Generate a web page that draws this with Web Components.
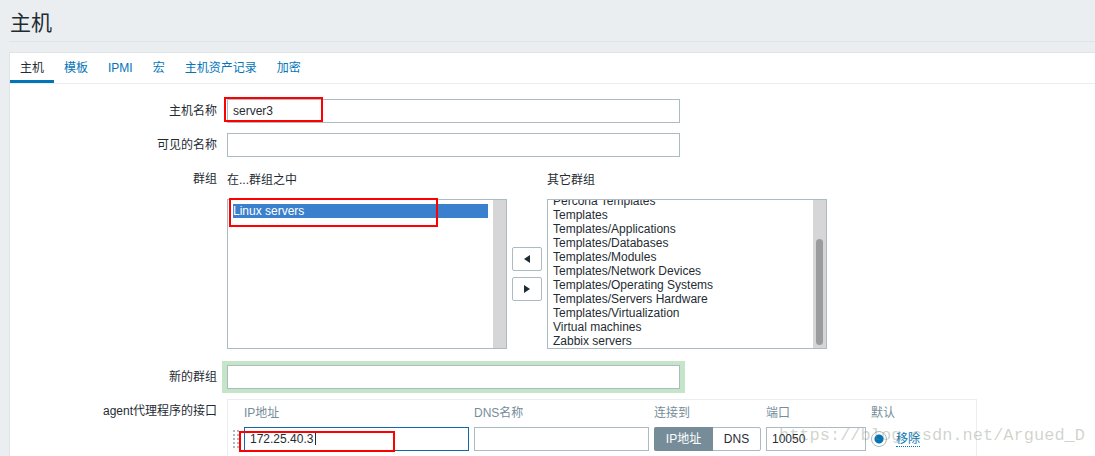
<!DOCTYPE html>
<html lang="zh-CN">
<head>
<meta charset="utf-8">
<meta name="viewport" content="width=device-width, initial-scale=1">
<title>主机</title>
<style>
  body {
    margin: 0;
    background: #ebeef0;
    color: #1f2c33;
    font: 12px/14px "Liberation Sans", "Noto Sans CJK SC", sans-serif;
  }
</style>
</head>
<body>
<host-page></host-page>

<script>
const FIELD_CSS = `
  *, *::before, *::after { box-sizing: border-box; }
  input, select, button { font: inherit; color: inherit; margin: 0; outline: none; }
  input[type="text"] {
    display: block;
    width: 100%;
    height: 24px;
    padding: 0 5px;
    border: 1px solid #acbbc2;
    border-radius: 0;
    background: #fff;
  }
`;

class TabBar extends HTMLElement {
  constructor() {
    super();
    this.attachShadow({ mode: 'open' });
  }

  connectedCallback() {
    const tabs = this.getAttribute('tabs').split(',');
    this.shadowRoot.innerHTML = `
      <style>
        :host { display: block; border-bottom: 1px solid #ebeef0; }
        nav { display: flex; }
        a {
          padding: 8px 10px 5px;
          border-bottom: 3px solid transparent;
          color: #0275b8;
          text-decoration: none;
        }
        a[aria-current] { color: #1f2c33; border-color: #0275b8; }
      </style>
      <nav>
        ${tabs.map((tab, i) => `<a href="#"${i === 0 ? ' aria-current="page"' : ''}>${tab}</a>`).join('')}
      </nav>
    `;
  }
}

class FormRow extends HTMLElement {
  constructor() {
    super();
    this.attachShadow({ mode: 'open' });
  }

  connectedCallback() {
    this.shadowRoot.innerHTML = `
      <style>
        :host { display: grid; grid-template-columns: 207px minmax(0, 1fr); column-gap: 10px; }
        .label { padding-top: 5px; text-align: right; }
      </style>
      <div class="label">${this.getAttribute('label')}</div>
      <div><slot></slot></div>
    `;
  }
}

class TextField extends HTMLElement {
  constructor() {
    super();
    this.attachShadow({ mode: 'open' });
  }

  connectedCallback() {
    this.shadowRoot.innerHTML = `
      <style>
        ${FIELD_CSS}
        :host { display: block; position: relative; max-width: 453px; }
        :host([highlight]) input { box-shadow: 1px 0 0 4px #c5e5c9, -1px 0 0 4px #c5e5c9; }
        :host([active]) input { border-color: #0f6ba8; }
        .caret {
          display: none;
          position: absolute;
          top: 5px;
          left: 71px;
          width: 1px;
          height: 13px;
          background: #1f2c33;
        }
        :host([active]) .caret { display: block; }
      </style>
      <input type="text" aria-label="${this.getAttribute('label')}" value="${this.getAttribute('value') || ''}">
      <span class="caret"></span>
    `;
  }
}

class ListBox extends HTMLElement {
  constructor() {
    super();
    this.attachShadow({ mode: 'open' });
  }

  connectedCallback() {
    const items = this.getAttribute('items').split(',');
    const selected = this.getAttribute('selected');
    this.shadowRoot.innerHTML = `
      <style>
        ${FIELD_CSS}
        :host { display: block; flex: 0 1 280px; min-width: 0; }
        label { display: block; padding: 6px 0 12px; }
        .box { display: flex; height: 150px; border: 1px solid #acbbc2; background: #fff; }
        select {
          flex: 1;
          min-width: 0;
          height: 100%;
          padding: 4px 5px;
          border: 0;
          border-radius: 0;
          background: none;
          overflow-y: scroll;
          scrollbar-width: none;
        }
        option { height: 14px; min-height: 14px; padding: 0; line-height: 14px; }
        option:checked { color: #fff; background: #3a80cc linear-gradient(#3a80cc, #3a80cc); }
        .track {
          display: flex;
          flex: 0 0 13px;
          flex-direction: column;
          justify-content: flex-end;
          padding: 3px;
          background: #d6d6d6;
        }
        .thumb { height: 106px; border-radius: 4px; background: #9b9c9e; }
      </style>
      <label for="list">${this.getAttribute('label')}</label>
      <div class="box">
        <select id="list" multiple>
          ${items.map((item) => `<option${item === selected ? ' selected' : ''}>${item}</option>`).join('')}
        </select>
        <div class="track">${this.hasAttribute('scroll') ? '<div class="thumb"></div>' : ''}</div>
      </div>
    `;
    this.shadowRoot.querySelector('select').scrollTop = Number(this.getAttribute('scroll') || 0);
  }
}

class GroupTransfer extends HTMLElement {
  constructor() {
    super();
    this.attachShadow({ mode: 'open' });
  }

  connectedCallback() {
    this.shadowRoot.innerHTML = `
      <style>
        :host { display: flex; max-width: 600px; gap: 5px; }
        .moves { display: flex; flex-direction: column; justify-content: center; gap: 6px; padding-top: 32px; }
        button {
          display: flex;
          align-items: center;
          justify-content: center;
          width: 30px;
          height: 24px;
          padding: 0;
          border: 1px solid #acbbc2;
          border-radius: 2px;
          background: #fff;
          color: #1f2c33;
        }
        svg { display: block; }
      </style>
      <list-box label="在...群组之中" items="Linux servers" selected="Linux servers"></list-box>
      <div class="moves">
        <button type="button" aria-label="◀"><svg width="6" height="8" viewBox="0 0 6 8"><path d="M6 0v8L0 4z" fill="currentColor"/></svg></button>
        <button type="button" aria-label="▶"><svg width="6" height="8" viewBox="0 0 6 8"><path d="M0 0v8l6-4z" fill="currentColor"/></svg></button>
      </div>
      <list-box label="其它群组" scroll="10" items="Percona Templates,Templates,Templates/Applications,Templates/Databases,Templates/Modules,Templates/Network Devices,Templates/Operating Systems,Templates/Servers Hardware,Templates/Virtualization,Virtual machines,Zabbix servers"></list-box>
    `;
  }
}

class AgentInterfaces extends HTMLElement {
  constructor() {
    super();
    this.attachShadow({ mode: 'open' });
  }

  connectedCallback() {
    this.shadowRoot.innerHTML = `
      <style>
        ${FIELD_CSS}
        :host {
          display: block;
          box-sizing: border-box;
          max-width: 750px;
          padding-bottom: 5px;
          border: solid #ebeef0;
          border-width: 1px 1px 0;
        }
        table { width: 100%; border-collapse: collapse; table-layout: fixed; }
        th { padding: 6px 5px 7px 0; color: #768d99; font-weight: normal; text-align: left; }
        td { padding: 0 5px 0 0; }
        .drag { width: 16px; }
        .ip { width: 230px; }
        .dns { width: 180px; }
        .connect { width: 112px; }
        .port { width: 105px; }
        .default { width: 25px; white-space: nowrap; }
        .drag svg { display: block; margin-left: 5px; }
        .toggle { display: flex; height: 24px; border: 1px solid #acbbc2; border-radius: 2px; background: #fff; }
        .toggle input { position: absolute; opacity: 0; }
        .toggle label { display: flex; flex: 1; align-items: center; justify-content: center; }
        .toggle input:checked + label {
          flex: 0 0 59px;
          margin: -1px 0 -1px -1px;
          border-radius: 2px 0 0 2px;
          background: #768d99;
          color: #fff;
        }
        .radio {
          display: block;
          appearance: none;
          width: 16px;
          height: 16px;
          border: 1px solid #acbbc2;
          border-radius: 50%;
          background: radial-gradient(circle, #0275b8 4px, #fff 5px);
        }
        a { color: #0275b8; text-decoration: none; border-bottom: 1px dotted #0275b8; }
      </style>
      <table>
        <thead>
          <tr>
            <th class="drag"></th>
            <th class="ip">IP地址</th>
            <th class="dns">DNS名称</th>
            <th class="connect">连接到</th>
            <th class="port">端口</th>
            <th class="default">默认</th>
            <th></th>
          </tr>
        </thead>
        <tbody>
          <tr>
            <td class="drag">
              <svg width="8" height="18" viewBox="0 0 8 18" fill="#acbbc2">
                ${[0, 4, 8, 12, 16].map((y) => `<path d="M0 ${y}h2v2H0zM4 ${y}h2v2H4z"/>`).join('')}
              </svg>
            </td>
            <td><text-field label="IP地址" value="172.25.40.3" active></text-field></td>
            <td><text-field label="DNS名称"></text-field></td>
            <td>
              <div class="toggle">
                <input type="radio" name="connect" id="connect-ip" checked><label for="connect-ip">IP地址</label>
                <input type="radio" name="connect" id="connect-dns"><label for="connect-dns">DNS</label>
              </div>
            </td>
            <td><text-field label="端口" value="10050"></text-field></td>
            <td><input class="radio" type="radio" aria-label="默认" checked></td>
            <td><a href="#">移除</a></td>
          </tr>
        </tbody>
      </table>
    `;
  }
}

// Red frame laid over a field to point it out
class MarkFrame extends HTMLElement {
  constructor() {
    super();
    this.attachShadow({ mode: 'open' });
    this.shadowRoot.innerHTML = `
      <style>
        :host { position: absolute; box-sizing: border-box; border: 2px solid #f00; pointer-events: none; }
      </style>
    `;
  }
}

class HostPage extends HTMLElement {
  constructor() {
    super();
    this.attachShadow({ mode: 'open' });
  }

  connectedCallback() {
    this.shadowRoot.innerHTML = `
      <style>
        :host { display: flex; flex-direction: column; position: relative; min-height: 100vh; }
        header { margin-left: 9px; border-bottom: 1px solid #dfe4e7; }
        h1 { margin: 0; padding: 9px 1px 4px; font-size: 21px; line-height: 28px; font-weight: normal; }
        main { flex: 1; margin: 10px 0 0 9px; border: solid #dfe4e7; border-width: 1px 0 0 1px; background: #fff; }
        form { display: flex; flex-direction: column; gap: 10px; padding-top: 15px; }
        .marked { position: relative; }
        .new-group { padding-top: 6px; }
        .name { top: -2px; left: -3px; width: 99px; height: 25px; }
        .group { top: 31px; left: 2px; width: 209px; height: 29px; }
        .address { top: 32px; left: 12px; width: 156px; height: 21px; }
        .watermark {
          position: absolute;
          right: 10px;
          bottom: 9px;
          color: rgba(120, 130, 110, 0.35);
          font: 17px/22px "Liberation Mono", monospace;
          pointer-events: none;
        }
      </style>
      <header><h1>主机</h1></header>
      <main>
        <tab-bar tabs="主机,模板,IPMI,宏,主机资产记录,加密"></tab-bar>
        <form>
          <form-row label="主机名称">
            <div class="marked">
              <text-field label="主机名称" value="server3"></text-field>
              <mark-frame class="name"></mark-frame>
            </div>
          </form-row>
          <form-row label="可见的名称"><text-field label="可见的名称"></text-field></form-row>
          <form-row label="群组">
            <div class="marked">
              <group-transfer></group-transfer>
              <mark-frame class="group"></mark-frame>
            </div>
          </form-row>
          <form-row class="new-group" label="新的群组"><text-field label="新的群组" highlight></text-field></form-row>
          <form-row label="agent代理程序的接口">
            <div class="marked">
              <agent-interfaces></agent-interfaces>
              <mark-frame class="address"></mark-frame>
            </div>
          </form-row>
        </form>
      </main>
      <div class="watermark">https://blog.csdn.net/Argued_D</div>
    `;
  }
}

customElements.define('tab-bar', TabBar);
customElements.define('form-row', FormRow);
customElements.define('text-field', TextField);
customElements.define('list-box', ListBox);
customElements.define('group-transfer', GroupTransfer);
customElements.define('agent-interfaces', AgentInterfaces);
customElements.define('mark-frame', MarkFrame);
customElements.define('host-page', HostPage);
</script>
</body>
</html>
